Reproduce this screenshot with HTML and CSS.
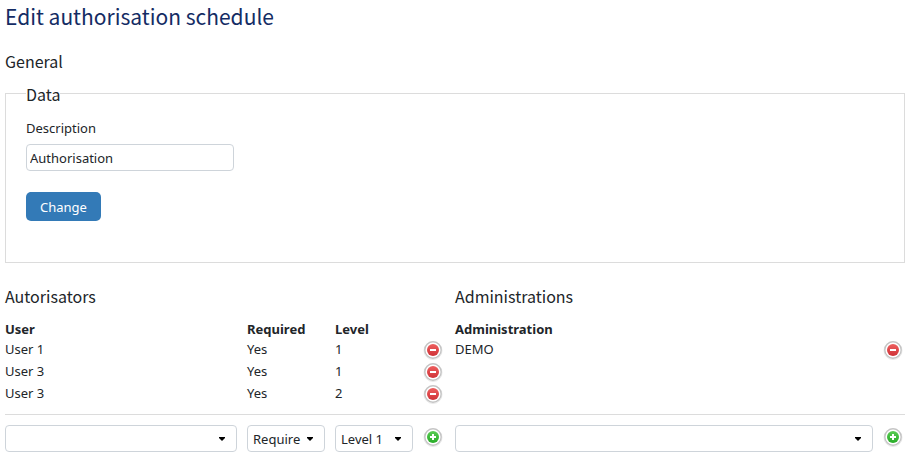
FILE: index.html
```html
<!DOCTYPE html>
<html lang="en">
<head>
    <meta charset="UTF-8">
    <meta name="viewport" content="width=device-width, initial-scale=1.0">
    <title>Edit authorisation schedule</title>
    <link rel="stylesheet" href="styles.css">
</head>
<body>
    <!-- Shared icons for the add and delete buttons -->
    <svg class="icon-defs" width="0" height="0" aria-hidden="true">
        <defs>
            <linearGradient id="red" x1="0" y1="0" x2="0" y2="1">
                <stop offset="0" stop-color="#ee5f5f"/>
                <stop offset="1" stop-color="#cf3237"/>
            </linearGradient>
            <linearGradient id="green" x1="0" y1="0" x2="0" y2="1">
                <stop offset="0" stop-color="#5bcb55"/>
                <stop offset="1" stop-color="#27ac27"/>
            </linearGradient>
            <symbol id="icon-delete" viewBox="0 0 20 20">
                <circle cx="10" cy="10.5" r="9" fill="none" stroke="#e9e9e9"/>
                <circle cx="10" cy="10" r="8.2" fill="#fff" stroke="#c4c4c4" stroke-width="1.4"/>
                <circle cx="10" cy="10" r="6" fill="url(#red)"/>
                <rect x="7" y="9" width="6" height="2" fill="#fff"/>
            </symbol>
            <symbol id="icon-add" viewBox="0 0 20 20">
                <circle cx="10" cy="10.5" r="9" fill="none" stroke="#e9e9e9"/>
                <circle cx="10" cy="10" r="8.2" fill="#fff" stroke="#c4c4c4" stroke-width="1.4"/>
                <circle cx="10" cy="10" r="6" fill="url(#green)"/>
                <path d="M9 7h2v2h2v2h-2v2H9v-2H7V9h2z" fill="#fff"/>
            </symbol>
        </defs>
    </svg>

    <h1>Edit authorisation schedule</h1>

    <h2>General</h2>
    <form class="general">
        <fieldset>
            <legend>Data</legend>
            <label for="description">Description</label>
            <input type="text" id="description" name="description" value="Authorisation">
            <button type="button" class="btn">Change</button>
        </fieldset>
    </form>

    <div class="columns lists">
        <div>
            <h2>Autorisators</h2>
            <table>
                <thead>
                    <tr>
                        <th>User</th>
                        <th class="col-small">Required</th>
                        <th class="col-small">Level</th>
                        <td class="col-icon"></td>
                    </tr>
                </thead>
                <tbody>
                    <tr>
                        <td>User 1</td>
                        <td>Yes</td>
                        <td>1</td>
                        <td><button type="button" class="icon" aria-label="Delete"><svg><use href="#icon-delete"/></svg></button></td>
                    </tr>
                    <tr>
                        <td>User 3</td>
                        <td>Yes</td>
                        <td>1</td>
                        <td><button type="button" class="icon" aria-label="Delete"><svg><use href="#icon-delete"/></svg></button></td>
                    </tr>
                    <tr>
                        <td>User 3</td>
                        <td>Yes</td>
                        <td>2</td>
                        <td><button type="button" class="icon" aria-label="Delete"><svg><use href="#icon-delete"/></svg></button></td>
                    </tr>
                </tbody>
            </table>
        </div>
        <div>
            <h2>Administrations</h2>
            <table>
                <thead>
                    <tr>
                        <th>Administration</th>
                        <td class="col-icon-last"></td>
                    </tr>
                </thead>
                <tbody>
                    <tr>
                        <td>DEMO</td>
                        <td><button type="button" class="icon" aria-label="Delete"><svg><use href="#icon-delete"/></svg></button></td>
                    </tr>
                </tbody>
            </table>
        </div>
    </div>

    <div class="columns add">
        <form class="add-row">
            <select name="user" class="wide" aria-label="User"><option></option></select>
            <select name="required" class="small" aria-label="Required"><option>Require</option></select>
            <select name="level" class="small" aria-label="Level"><option>Level 1</option></select>
            <button type="button" class="icon" aria-label="Add"><svg><use href="#icon-add"/></svg></button>
        </form>
        <form class="add-row last">
            <select name="administration" class="wide" aria-label="Administration"><option></option></select>
            <button type="button" class="icon" aria-label="Add"><svg><use href="#icon-add"/></svg></button>
        </form>
    </div>
</body>
</html>
```
FILE: styles.css
```css
* {
    box-sizing: border-box;
}

body {
    margin: 0;
    padding: 0 4px 0 5px;
    background-color: #fff;
    color: #212529;
    font-family: "Noto Sans", sans-serif;
    font-size: 13px;
    line-height: 20px;
}

.icon-defs {
    position: absolute;
}

h1, h2, legend {
    font-family: "Noto Sans CJK JP", "Noto Sans", sans-serif;
    font-weight: normal;
}

h1 {
    margin: 0 0 17px;
    color: #142c64;
    font-size: 21px;
    line-height: 32px;
}

h2, legend {
    margin: 0;
    font-size: 16px;
    line-height: 24px;
}

fieldset {
    min-width: 0;
    margin: 7px 0 0;
    padding: 12px 20px 41px;
    border: 1px solid #dcdcdc;
}

legend {
    padding: 2px 0 0;
}

label {
    display: block;
    margin-bottom: 6px;
}

input, select {
    height: 27px;
    border: 1px solid #ced4da;
    border-radius: 4px;
    background-color: #fff;
    color: #212529;
    font: inherit;
}

input {
    display: block;
    width: 208px;
    padding: 0 3px;
}

.btn {
    display: block;
    height: 29px;
    margin-top: 21px;
    padding: 0 14px;
    border: 0;
    border-radius: 5px;
    background-color: #337ab7;
    color: #fff;
    font: inherit;
}

.columns {
    display: grid;
    grid-template-columns: 1fr 1fr;
}

.lists {
    margin-top: 21px;
}

table {
    width: 100%;
    margin: 11px 0 9px;
    border-collapse: collapse;
    table-layout: fixed;
}

tr {
    height: 22px;
}

thead tr {
    height: 20px;
}

th, td {
    padding: 0;
    text-align: left;
    vertical-align: top;
}

.col-small {
    width: 88px;
}

.col-icon {
    width: 32px;
}

.col-icon-last {
    width: 22px;
}

.icon {
    display: block;
    width: 20px;
    height: 20px;
    padding: 0;
    border: 0;
    background: none;
}

.icon svg {
    display: block;
    width: 20px;
    height: 20px;
}

td .icon {
    margin: 1px 0 0;
}

.add {
    padding-top: 10px;
    border-top: 1px solid #dcdcdc;
}

.add-row {
    display: flex;
    gap: 10px;
    padding-right: 12px;
}

.add-row.last {
    padding-right: 2px;
}

.add-row .icon {
    margin: 2px 0 0;
}

/* small black arrow instead of the native one */
select {
    appearance: none;
    padding: 0 20px 0 5px;
    background-image: url("data:image/svg+xml,%3Csvg xmlns='http://www.w3.org/2000/svg' width='6' height='4'%3E%3Cpath d='M0 0h6v1L3 4 0 1z'/%3E%3C/svg%3E");
    background-repeat: no-repeat;
    background-position: right 11px center;
}

.wide {
    flex: 1;
    min-width: 0;
}

.small {
    width: 78px;
}
```
